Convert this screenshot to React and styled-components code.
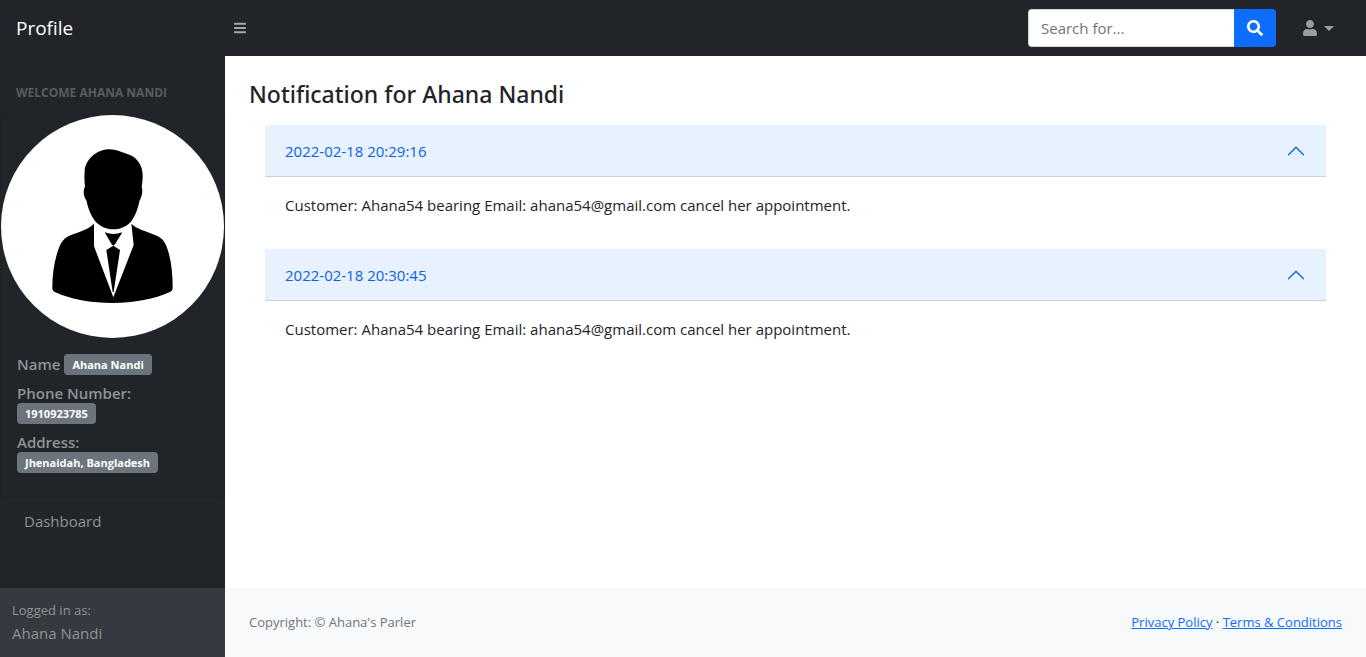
import React, { useState } from "react";
import styled, { createGlobalStyle } from "styled-components";
import { FaBars, FaSearch, FaUser } from "react-icons/fa";

const GlobalStyle = createGlobalStyle`
  *, *::before, *::after { box-sizing: border-box; }
  body {
    margin: 0;
    background: #fff;
    color: #212529;
    font-family: "Open Sans", "Noto Sans", sans-serif;
    font-size: 15px;
    line-height: 24px;
  }
  button, input { font: inherit; }
`;

const Page = styled.div`
  min-height: 100vh;
  display: flex;
  flex-direction: column;
`;

const TopBar = styled.header`
  display: flex;
  align-items: center;
  height: 56px;
  background: #212529;
`;

const Brand = styled.a`
  width: 225px;
  padding: 0 16px;
  color: #fff;
  font-size: 19px;
  line-height: 30px;
  text-decoration: none;
`;

const IconButton = styled.button`
  display: flex;
  align-items: center;
  gap: 7px;
  padding: 8px 9px;
  border: 0;
  background: none;
  color: ${(p) => p.$color};
  cursor: pointer;
`;

const BarsIcon = styled(FaBars)`
  width: 12px;
  height: 14px;
`;

const UserIcon = styled(FaUser)`
  width: 14px;
  height: 16px;
`;

const SearchForm = styled.form`
  display: flex;
  width: 248px;
  height: 38px;
  margin-left: auto;
`;

const SearchInput = styled.input`
  flex: 1;
  min-width: 0;
  padding: 6px 12px;
  border: 1px solid #ced4da;
  border-right: 0;
  border-radius: 4px 0 0 4px;
  color: #212529;
  background: #fff;
  &::placeholder { color: #6c757d; opacity: 1; }
`;

const SearchButton = styled.button`
  display: flex;
  align-items: center;
  justify-content: center;
  width: 42px;
  padding: 0;
  border: 0;
  border-radius: 0 4px 4px 0;
  background: #0d6efd;
  color: #fff;
  cursor: pointer;
`;

const UserMenu = styled.div`
  margin: 0 23px 0 18px;
`;

const Caret = styled.span`
  border: 5px solid transparent;
  border-top-color: currentColor;
  border-bottom: 0;
`;

const Body = styled.div`
  flex: 1;
  display: flex;
`;

const Sidebar = styled.nav`
  flex: 0 0 225px;
  display: flex;
  flex-direction: column;
  background: #212529;
  color: #909294;
`;

const SideHeading = styled.div`
  padding: 28px 16px 12px;
  color: #595c5f;
  font-size: 12px;
  font-weight: 700;
  line-height: 18px;
  text-transform: uppercase;
`;

const Card = styled.section`
  border: 1px solid #1e2125;
  border-radius: 4px;
`;

const Avatar = styled.svg`
  display: block;
  width: 100%;
`;

const Details = styled.dl`
  display: flex;
  flex-direction: column;
  gap: 8px;
  margin: 0;
  padding: 16px 16px 23px;
`;

const Detail = styled.div`
  display: flex;
  flex-direction: ${(p) => (p.$inline ? "row" : "column")};
  align-items: flex-start;
  column-gap: 4px;
  font-weight: 600;
  line-height: 20px;
`;

const Badge = styled.dd`
  margin: 0;
  padding: 0 8px;
  border-radius: 4px;
  background: #6c757d;
  color: #fff;
  font-size: 11px;
  font-weight: 700;
  line-height: 21px;
`;

const SideLink = styled.a`
  padding: 12px 24px;
  color: #909294;
  text-decoration: none;
`;

const SideFooter = styled.div`
  margin-top: auto;
  padding: 12px;
  background: #343a40;
`;

const Small = styled.div`
  font-size: 13px;
  line-height: 21px;
`;

const Content = styled.div`
  flex: 1;
  min-width: 0;
  display: flex;
  flex-direction: column;
`;

const Main = styled.main`
  flex: 1;
  padding: 24px;
`;

const Title = styled.h1`
  margin: 0 0 16px;
  font-family: "Noto Sans", "Open Sans", sans-serif;
  font-size: 23px;
  font-weight: 500;
  line-height: 29px;
`;

const Accordion = styled.div`
  padding: 0 16px;
`;

const ItemHeading = styled.h2`
  margin: 0;
  font: inherit;
`;

const ItemButton = styled.button`
  display: flex;
  align-items: center;
  justify-content: space-between;
  width: 100%;
  height: 52px;
  padding: 0 20px;
  border: 0;
  background: #e7f1ff;
  box-shadow: inset 0 -1px 0 #c8d1de;
  color: #0c63e4;
  text-align: left;
  cursor: pointer;
`;

const Chevron = styled.svg`
  width: 20px;
  height: 20px;
  fill: currentColor;
  transform: ${(p) => (p.$open ? "rotate(180deg)" : "none")};
`;

const ItemBody = styled.p`
  margin: 0;
  padding: 16px 20px 32px;
`;

const Footer = styled.footer`
  display: flex;
  justify-content: space-between;
  padding: 24px;
  background: #f8f9fa;
  color: #6c757d;
  font-size: 13px;
  line-height: 21px;
`;

const FooterLinks = styled.div`
  color: #212529;
`;

const FooterLink = styled.a`
  color: #0d6efd;
  text-decoration: underline;
`;

const notifications = [
  {
    time: "2022-02-18 20:29:16",
    text: "Customer: Ahana54 bearing Email: ahana54@gmail.com cancel her appointment.",
  },
  {
    time: "2022-02-18 20:30:45",
    text: "Customer: Ahana54 bearing Email: ahana54@gmail.com cancel her appointment.",
  },
];

function Notification({ time, text }) {
  const [open, setOpen] = useState(true);
  return (
    <article>
      <ItemHeading>
        <ItemButton type="button" aria-expanded={open} onClick={() => setOpen(!open)}>
          {time}
          <Chevron viewBox="0 0 16 16" $open={open} aria-hidden="true">
            <path d="M1.646 4.646a.5.5 0 0 1 .708 0L8 10.293l5.646-5.647a.5.5 0 0 1 .708.708l-6 6a.5.5 0 0 1-.708 0l-6-6a.5.5 0 0 1 0-.708z" />
          </Chevron>
        </ItemButton>
      </ItemHeading>
      {open && <ItemBody>{text}</ItemBody>}
    </article>
  );
}

function Portrait() {
  return (
    <Avatar viewBox="3 15 669 669" role="img" aria-label="Profile picture">
      <circle cx="337.5" cy="349.5" r="334.5" fill="#fff" />
      <path d="M325 118C345 117 365 127 388 134C412 143 427 166 428 194C428 208 427 218 425 230C429 241 426 260 419 271C414 296 406 318 393 335C378 351 358 358 339 358C318 358 300 349 285 333C272 317 264 295 259 271C251 260 248 240 255 230C253 213 253 195 254 182C258 146 290 120 325 118Z" />
      <path d="M282 341V409L340 562L401 405L394 341C409 357 438 363 463 374C484 382 492 390 500 410C513 445 518 487 518 533C518 540 515 544 508 547C466 567 401 579 338 579C274 579 211 568 166 547C159 544 157 540 157 533C157 489 164 443 180 406C189 387 198 381 216 374C241 364 267 357 282 341Z" />
      <path d="M314 367Q340 377 367 367L345 403L340 407L335 403Z" />
      <path d="M340 407L360 420L341 546H338L319 420Z" />
    </Avatar>
  );
}

export default function App() {
  return (
    <>
      <GlobalStyle />
      <Page>
        <TopBar>
          <Brand href="#">Profile</Brand>
          <IconButton type="button" aria-label="Toggle sidebar" $color="#a6a8a9">
            <BarsIcon />
          </IconButton>
          <SearchForm role="search" onSubmit={(e) => e.preventDefault()}>
            <SearchInput type="text" placeholder="Search for..." aria-label="Search for..." />
            <SearchButton type="submit" aria-label="Search">
              <FaSearch size={16} />
            </SearchButton>
          </SearchForm>
          <UserMenu>
            <IconButton type="button" aria-label="User menu" aria-haspopup="true" $color="#9b9d9e">
              <UserIcon />
              <Caret />
            </IconButton>
          </UserMenu>
        </TopBar>
        <Body>
          <Sidebar>
            <SideHeading>Welcome Ahana Nandi</SideHeading>
            <Card>
              <Portrait />
              <Details>
                <Detail $inline>
                  <dt>Name</dt>
                  <Badge>Ahana Nandi</Badge>
                </Detail>
                <Detail>
                  <dt>Phone Number:</dt>
                  <Badge>1910923785</Badge>
                </Detail>
                <Detail>
                  <dt>Address:</dt>
                  <Badge>Jhenaidah, Bangladesh</Badge>
                </Detail>
              </Details>
            </Card>
            <SideLink href="#">Dashboard</SideLink>
            <SideFooter>
              <Small>Logged in as:</Small>
              Ahana Nandi
            </SideFooter>
          </Sidebar>
          <Content>
            <Main>
              <Title>Notification for Ahana Nandi</Title>
              <Accordion>
                {notifications.map((n) => (
                  <Notification key={n.time} {...n} />
                ))}
              </Accordion>
            </Main>
            <Footer>
              <div>Copyright: © Ahana's Parler</div>
              <FooterLinks>
                <FooterLink href="#">Privacy Policy</FooterLink>
                {" · "}
                <FooterLink href="#">Terms &amp; Conditions</FooterLink>
              </FooterLinks>
            </Footer>
          </Content>
        </Body>
      </Page>
    </>
  );
}
